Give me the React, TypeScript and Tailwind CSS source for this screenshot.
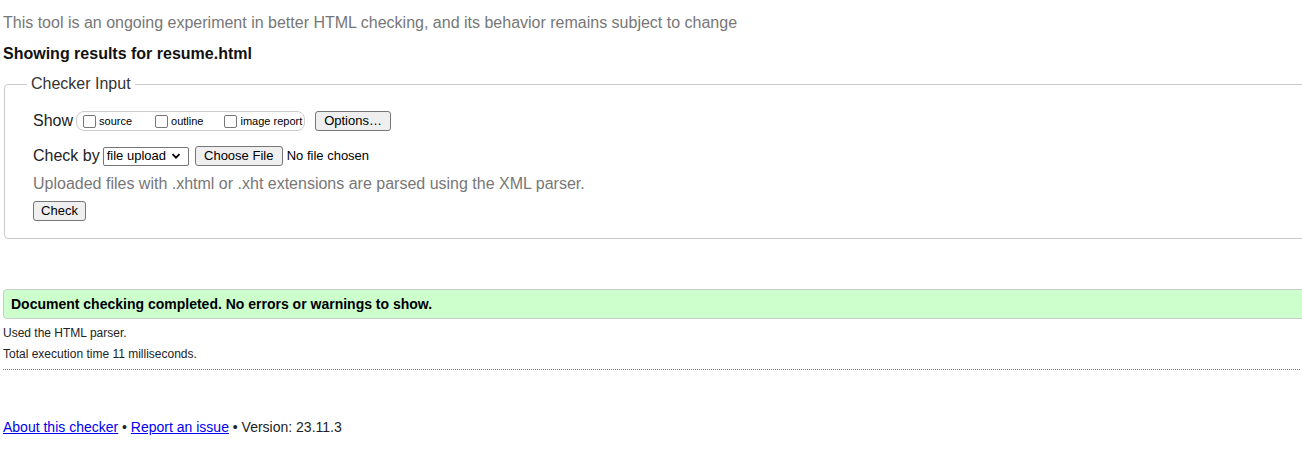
import React from "react";

const btn =
  "inline-flex items-center justify-center h-[20px] px-[6px] text-[13px] text-black bg-[#efefef] border border-[#767676] rounded-[3px]";

function Check({ label }: { label: string }) {
  return (
    <label className="inline-flex items-center">
      <span className="inline-block w-[13px] h-[13px] border border-[#767676] rounded-[2px] bg-white ml-[4px] mr-[3px]" />
      <span className="text-[11px] text-black">{label}</span>
    </label>
  );
}

export default function App() {
  return (
    <div className="w-full h-[452px] overflow-hidden bg-white">
      <div
        className="w-[1340px] text-black"
        style={{ fontFamily: '"Liberation Sans", Arial, sans-serif' }}
      >
        <p className="pt-[14px] pl-[3px] text-[16px] leading-[18px] text-[#777]">
          This tool is an ongoing experiment in better HTML checking, and its behavior remains
          subject to change
        </p>
        <h2 className="mt-[13px] pl-[3px] text-[16px] leading-[17px] font-bold text-[#111]">
          Showing results for resume.html
        </h2>

        {/* Checker Input */}
        <fieldset className="mt-[13px] ml-[4px] border border-[#ccc] rounded-[4px] pb-[16px]">
          <legend className="ml-[22px] px-[4px] text-[16px] leading-[18px] text-[#333]">
            Checker Input
          </legend>

          <div className="pl-[28px]">
            <div className="mt-[18px] flex items-center h-[20px]">
              <span className="text-[16px] text-[#222] mr-[3px]">Show</span>
              <div className="flex items-center h-[20px] w-[229px] border border-[#ccc] rounded-[8px] pl-[2px]">
                <Check label="source" />
                <span className="w-[19px]" />
                <Check label="outline" />
                <span className="w-[17px]" />
                <Check label="image report" />
              </div>
              <button className={`${btn} ml-[10px] w-[76px]`}>Options…</button>
            </div>

            <div className="mt-[15px] flex items-center h-[20px]">
              <span className="text-[16px] text-[#222] mr-[3px]">Check by</span>
              <span className="inline-flex items-center h-[19px] w-[86px] border border-[#767676] rounded-[2px] bg-white pl-[3px] text-[13px] text-black">
                file upload
                <svg width="10" height="10" viewBox="0 0 10 10" className="ml-[5px]">
                  <path d="M1.5 3.2 L5 6.7 L8.5 3.2" fill="none" stroke="#000" strokeWidth="1.8" />
                </svg>
              </span>
              <button className={`${btn} ml-[6px] w-[88px]`}>Choose File</button>
              <span className="ml-[4px] text-[13px] text-black">No file chosen</span>
            </div>

            <p className="mt-[9px] text-[16px] leading-[18px] text-[#777]">
              Uploaded files with .xhtml or .xht extensions are parsed using the XML parser.
            </p>

            <button className={`${btn} mt-[8px] w-[53px]`}>Check</button>
          </div>
        </fieldset>

        {/* Result */}
        <div className="mt-[50px] ml-[3px] h-[30px] flex items-center pl-[7px] bg-[#ccffcc] border border-[#ccc] rounded-[4px]">
          <span className="text-[14px] font-bold text-black">
            Document checking completed. No errors or warnings to show.
          </span>
        </div>

        <p className="mt-[7px] pl-[3px] text-[12px] leading-[14px] text-[#222]">
          Used the HTML parser.
        </p>
        <p className="mt-[7px] pl-[3px] text-[12px] leading-[14px] text-[#222]">
          Total execution time 11 milliseconds.
        </p>
        <div className="mt-[8px] ml-[3px] w-[1297px] border-t border-dotted border-[#777]" />

        <p className="mt-[49px] pl-[3px] text-[14px] leading-[16px] text-[#222]">
          <a href="#" className="text-[#0000ee] underline">
            About this checker
          </a>{" "}
          •{" "}
          <a href="#" className="text-[#0000ee] underline">
            Report an issue
          </a>{" "}
          • Version: 23.11.3
        </p>
      </div>
    </div>
  );
}
